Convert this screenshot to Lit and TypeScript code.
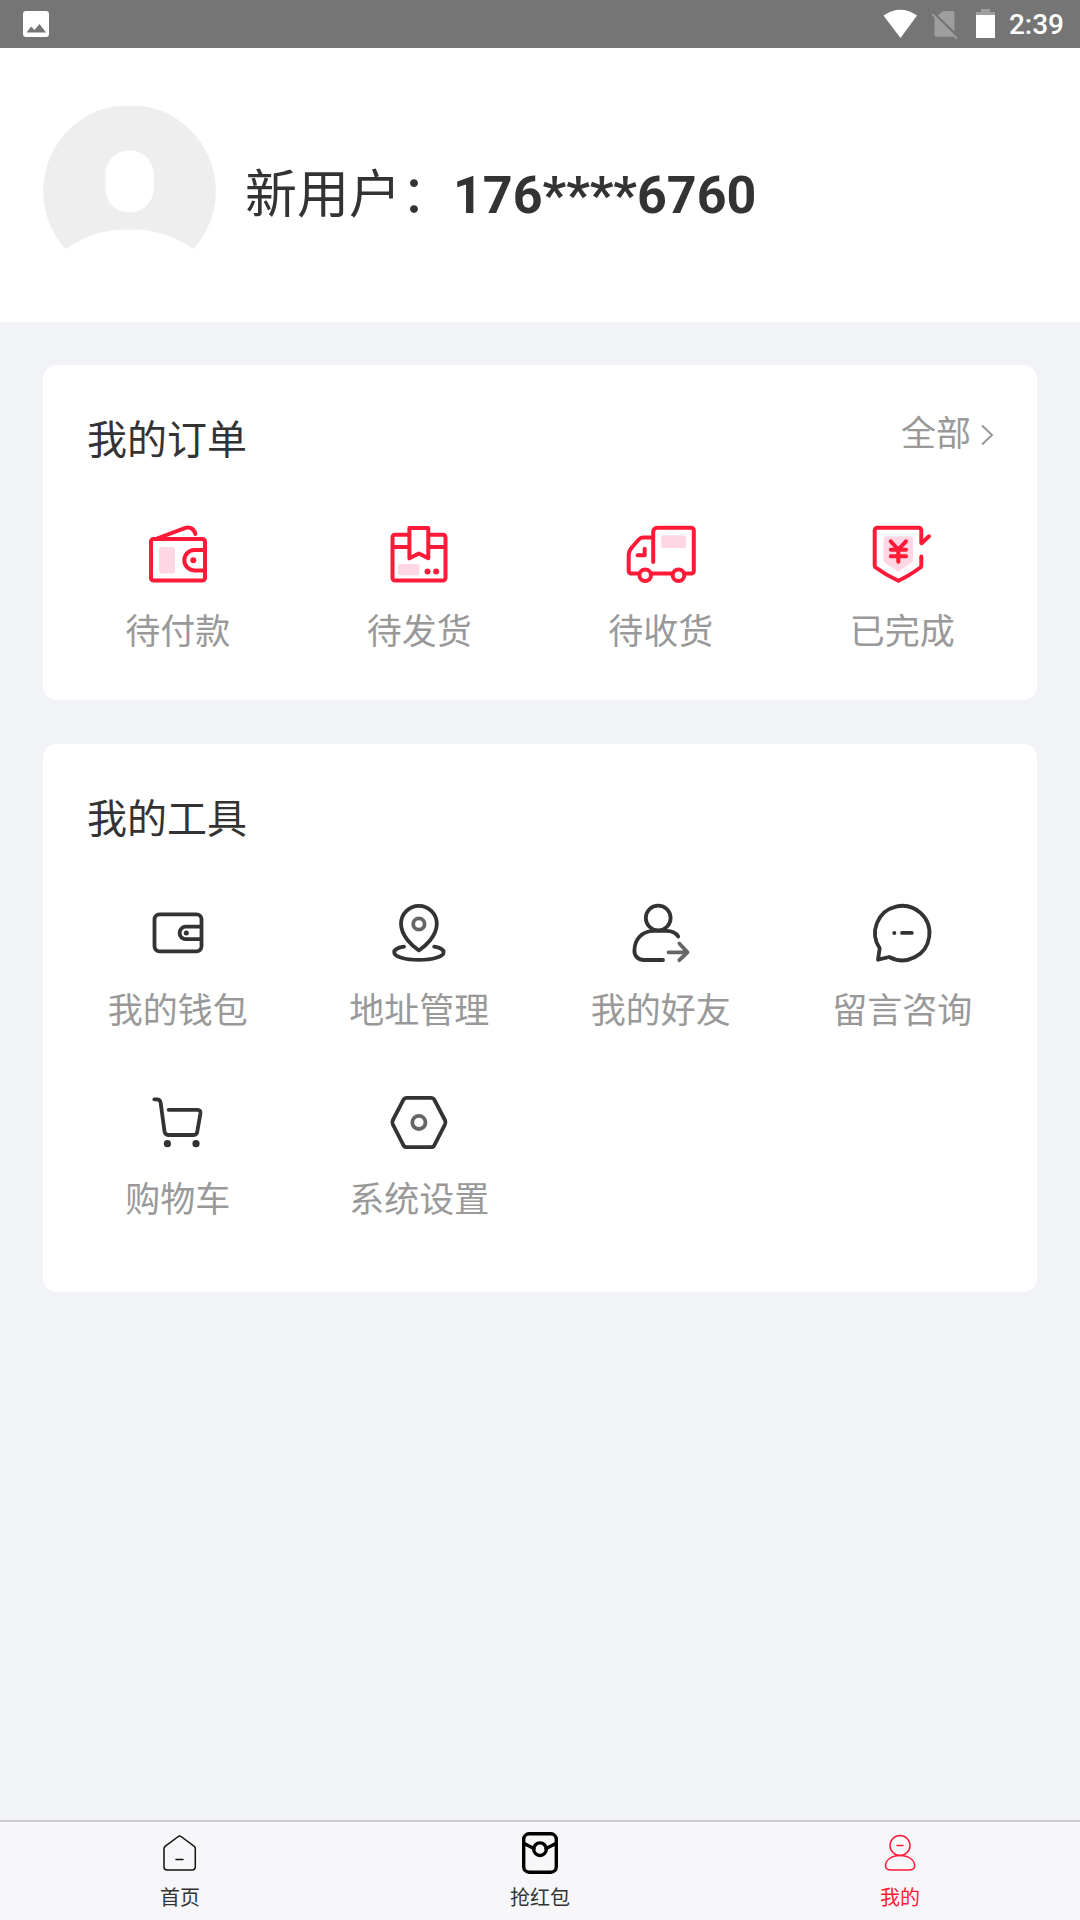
import { LitElement, html, css, svg, SVGTemplateResult } from "lit";
import { customElement, property, state } from "lit/decorators.js";
import { classMap } from "lit/directives/class-map.js";

interface Entry {
  label: string;
  icon: SVGTemplateResult;
}

const orderEntries: Entry[] = [
  {
    label: "待付款",
    icon: svg`
      <rect class="tint" x="21" y="33" width="16" height="26.5" rx="2.5" />
      <path d="M15.5 25H64.500a2.500 2.500 0 0 1 2.500 2.500V64a2.500 2.500 0 0 1 -2.500 2.500H15.500a2.500 2.500 0 0 1 -2.500 -2.500V27.500a2.500 2.500 0 0 1 2.500 -2.500Z" />
      <path d="M19 24.500L45.500 14.600C51 12.300 55.800 14 57.400 20" />
      <path d="M67 36H56.500a10.200 10.200 0 0 0 0 20.400H67" />
      <circle class="dot" cx="55.300" cy="46.200" r="3" />
    `,
  },
  {
    label: "待发货",
    icon: svg`
      <rect class="tint" x="19" y="50" width="21.500" height="11.200" rx="2.500" />
      <path d="M30 20.700H16a2.500 2.500 0 0 0 -2.500 2.500V64a2.500 2.500 0 0 0 2.500 2.500H64a2.500 2.500 0 0 0 2.500 -2.500V23.200a2.500 2.500 0 0 0 -2.500 -2.500H50" />
      <path d="M14 33H30M50 33H66" />
      <path d="M30.400 44.300V14H49.300V44.300L39.900 39.500Z" />
      <circle class="dot" cx="48.500" cy="57.500" r="3" />
      <circle class="dot" cx="57.200" cy="57.500" r="3" />
    `,
  },
  {
    label: "待收货",
    icon: svg`
      <rect class="tint" x="40.200" y="21.300" width="24.800" height="12.700" rx="2.500" />
      <path d="M32.200 48V17.700a4 4 0 0 1 4 -4H70.300a2.500 2.500 0 0 1 2.500 2.500V57a2.500 2.500 0 0 1 -2.500 2.500H64" />
      <path d="M31 23.500H21.800C20 23.500 19 24.200 17.800 25.500L11 33.200C8.500 36.200 7.700 38 7.700 41V57a2.500 2.500 0 0 0 2.500 2.500H17M31 59.500H51" />
      <path d="M23.700 34.700V41.300H16.500" />
      <circle cx="24.200" cy="61.300" r="5.800" />
      <circle cx="57.500" cy="61.300" r="5.800" />
    `,
  },
  {
    label: "已完成",
    icon: svg`
      <path class="tint" d="M24 22.300H48.500a2.500 2.500 0 0 1 2.500 2.500V46.500a2.500 2.500 0 0 1 -1.200 2L38 56.500a3 3 0 0 1 -3.500 0L22.800 48.500a2.500 2.500 0 0 1 -1.200 -2V24.800a2.500 2.500 0 0 1 2.500 -2.500Z" />
      <path d="M59.300 28.500V16.200a2.500 2.500 0 0 0 -2.500 -2.500H15.200a2.500 2.500 0 0 0 -2.500 2.500V51.500a2.500 2.500 0 0 0 1 2C20.500 58.500 28 63 36.300 66.800C44.500 63 51.500 58.500 58.300 53.500a2.500 2.500 0 0 0 1 -2V42.500" />
      <path d="M59.600 29.200L67 22.300" />
      <path d="M28.700 27.300L36.300 35.500L44 27.300M36.300 36V47.800M28.800 35.800H44M28.800 42.300H44" />
    `,
  },
];

const toolEntries: Entry[] = [
  {
    label: "我的钱包",
    icon: svg`
      <rect x="16.500" y="21.300" width="47" height="37" rx="5" />
      <path d="M63 33.700H47.800a6.200 6.200 0 0 0 0 12.400H63" />
      <circle class="dot" cx="48.300" cy="39.900" r="2.500" />
    `,
  },
  {
    label: "地址管理",
    icon: svg`
      <path d="M39.900 57.500C34 53.500 22 43 22 30.700A17.900 17.900 0 0 1 57.800 30.700C57.800 43 46 53.500 39.900 57.500Z" />
      <circle class="soft" cx="39.900" cy="31" r="5.700" />
      <path d="M25 53.700C19 54.600 15.200 56.800 15.200 59.200C15.200 63.800 26.500 66.900 39.900 66.900S64.600 63.800 64.600 59.200C64.600 56.800 61 54.600 55.200 53.700" />
    `,
  },
  {
    label: "我的好友",
    icon: svg`
      <circle cx="37.200" cy="25" r="12.400" />
      <path d="M57.200 43.500C55 39.800 51 37.900 45.500 37.900H33C20.500 37.900 13.400 47 13.400 58C13.400 63.300 17.500 67 23 67H42" />
      <path class="soft" d="M47.500 59.300H66M58.300 50.500L66.500 59.300L58.300 67.200" />
    `,
  },
  {
    label: "留言咨询",
    icon: svg`
      <path d="M17.700 55.300A27.200 27.200 0 1 1 27.300 64L16 66.700Z" />
      <circle class="dot" cx="32.300" cy="39.900" r="2" />
      <path d="M40 39.900H49.800" />
    `,
  },
  {
    label: "购物车",
    icon: svg`
      <path d="M16.300 17.300H19C21.300 17.300 22.300 18.500 22.600 20.500L26.500 49.300C26.900 51.700 28 53 30.300 53H55.500C57.800 53 59 51.800 59.300 49.500L62.400 31.500C62.700 29 61.700 27.800 59.500 27.800H30.700" />
      <circle class="dot" cx="29.400" cy="61.700" r="3.600" />
      <circle class="dot" cx="58" cy="61.700" r="3.600" />
    `,
  },
  {
    label: "系统设置",
    icon: svg`
      <path d="M27.800 15.800H52C53.600 15.800 54.600 16.400 55.400 17.800L65.900 38C66.700 39.500 66.700 41.200 65.900 42.700L55.400 63.200C54.600 64.600 53.600 65.200 52 65.200H27.800C26.200 65.200 25.200 64.600 24.400 63.200L13.900 42.700C13.100 41.200 13.100 39.500 13.900 38L24.400 17.800C25.200 16.400 26.200 15.800 27.800 15.800Z" />
      <circle class="soft" cx="39.900" cy="40.400" r="6.600" />
    `,
  },
];

const tabs: (Entry & { heavy?: boolean })[] = [
  {
    label: "首页",
    icon: svg`
      <path d="M8 19.500C8 18.500 8.300 18 9 17.400L22.300 7.500Q23.700 6.600 25 7.500L38.300 17.400C39 18 39.300 18.500 39.300 19.500V38a3 3 0 0 1 -3 3H11a3 3 0 0 1 -3 -3Z" />
      <path d="M20 30.500H27" />
    `,
  },
  {
    label: "抢红包",
    heavy: true,
    icon: svg`
      <rect x="7.700" y="4.800" width="32.600" height="38.400" rx="5.500" />
      <path d="M8 14.500L18 19.500M40 14.500L30 19.500" />
      <circle cx="24" cy="20.200" r="6.300" />
    `,
  },
  {
    label: "我的",
    icon: svg`
      <circle cx="24" cy="16.500" r="10" />
      <path d="M24 26.500C32.500 26.500 38.700 31 38.700 37C38.700 40 36.500 41 32.500 41H15.500C11.500 41 9.500 40 9.500 37C9.500 31 15.500 26.500 24 26.500Z" />
      <path d="M21 16.500H27" />
    `,
  },
];

@customElement("status-bar")
export class StatusBar extends LitElement {
  static styles = css`
    :host {
      display: flex;
      align-items: center;
      justify-content: space-between;
      height: 48px;
      padding: 0 16px 0 22px;
      background: #757575;
      color: #fff;
      font: 500 28px/48px Roboto, "Noto Sans CJK SC", sans-serif;
    }
    .group {
      display: flex;
      align-items: center;
      gap: 14px;
    }
    svg {
      display: block;
      fill: currentColor;
    }
    .dim {
      opacity: 0.3;
    }
    time {
      padding-top: 2px;
    }
  `;

  render() {
    return html`
      <svg width="28" height="28" viewBox="0 0 28 28" aria-hidden="true">
        <path fill-rule="evenodd" d="M4 1H24a3 3 0 0 1 3 3V24a3 3 0 0 1 -3 3H4a3 3 0 0 1 -3 -3V4a3 3 0 0 1 3 -3ZM4.500 22.500H24L17.500 14L12.500 20L9 16.500Z" />
      </svg>
      <div class="group">
        <svg width="34" height="30" viewBox="0 0 34 30" aria-hidden="true">
          <path d="M0.500 6.500Q17.500 -5 34 6.500L17.500 29Z" />
        </svg>
        <svg width="30" height="30" viewBox="0 0 30 30" aria-hidden="true">
          <path class="dim" d="M7 6.500L11 2.800Q12 2 13 2H21.500Q23.500 2 23.500 4V22.500ZM2 4.500L26.500 28.800L25 30.200L22.600 27.800H5.500Q3.500 27.800 3.500 25.800V8.600L0.600 5.800Z" />
        </svg>
        <svg width="20" height="30" viewBox="0 0 20 30" aria-hidden="true">
          <path class="dim" d="M6 0H15V3H20V6H1V3H6Z" />
          <path d="M1 6H20V29H1Z" />
        </svg>
        <time>2:39</time>
      </div>
    `;
  }
}

@customElement("entry-grid")
export class EntryGrid extends LitElement {
  @property({ attribute: false }) entries: Entry[] = [];
  @property() tone: "accent" | "plain" = "plain";

  static styles = css`
    :host {
      display: block;
    }
    .grid {
      display: grid;
      grid-template-columns: repeat(4, 1fr);
      row-gap: 46px;
    }
    .entry {
      display: flex;
      flex-direction: column;
      align-items: center;
      gap: 15px;
      padding: 0;
      border: 0;
      background: none;
      color: #999;
      font: 400 35px/48px Roboto, "Noto Sans CJK SC", sans-serif;
      cursor: pointer;
    }
    svg {
      display: block;
      width: 80px;
      height: 80px;
      fill: none;
      stroke: #333;
      stroke-width: 3.8;
      stroke-linecap: round;
      stroke-linejoin: round;
    }
    .accent svg {
      stroke: #ff1a37;
      stroke-width: 4;
    }
    .dot {
      fill: #333;
      stroke: none;
    }
    .accent .dot {
      fill: #ff1a37;
    }
    .soft {
      stroke: #666;
    }
    .tint {
      fill: #ffd6e4;
      stroke: none;
    }
  `;

  render() {
    return html`
      <div class=${classMap({ grid: true, accent: this.tone === "accent" })}>
        ${this.entries.map(
          (entry) => html`
            <button class="entry" type="button">
              <svg viewBox="0 0 80 80" aria-hidden="true">${entry.icon}</svg>
              <span>${entry.label}</span>
            </button>
          `
        )}
      </div>
    `;
  }
}

@customElement("tab-bar")
export class TabBar extends LitElement {
  @state() private current = "我的";

  static styles = css`
    :host {
      display: block;
    }
    .tabs {
      display: grid;
      grid-template-columns: repeat(3, 1fr);
      padding: 7px 0 10px;
      border-top: 2px solid #cbccd0;
      background: #f7f7fa;
    }
    .tab {
      display: flex;
      flex-direction: column;
      align-items: center;
      gap: 9px;
      color: #333;
      font: 400 20px/24px Roboto, "Noto Sans CJK SC", sans-serif;
      text-decoration: none;
    }
    svg {
      display: block;
      width: 48px;
      height: 48px;
      fill: none;
      stroke: #111;
      stroke-width: 1.5;
      stroke-linecap: round;
      stroke-linejoin: round;
    }
    .heavy svg {
      stroke: #000;
      stroke-width: 3.4;
    }
    .current {
      color: #ff1a37;
    }
    .current svg {
      stroke: #ff1a37;
    }
  `;

  private select(event: Event, label: string) {
    event.preventDefault();
    this.current = label;
  }

  render() {
    return html`
      <nav class="tabs">
        ${tabs.map(
          (tab) => html`
            <a
              href="#"
              class=${classMap({ tab: true, heavy: !!tab.heavy, current: tab.label === this.current })}
              @click=${(event: Event) => this.select(event, tab.label)}
            >
              <svg viewBox="0 0 48 48" aria-hidden="true">${tab.icon}</svg>
              <span>${tab.label}</span>
            </a>
          `
        )}
      </nav>
    `;
  }
}

@customElement("app-root")
export class AppRoot extends LitElement {
  static styles = css`
    :host {
      display: flex;
      flex-direction: column;
      min-height: 100vh;
      background: #f1f3f7;
      color: #333;
      font-family: Roboto, "Noto Sans CJK SC", sans-serif;
    }
    .profile {
      display: flex;
      align-items: center;
      gap: 29px;
      padding: 58px 43px 44px;
      background: #fff;
    }
    .avatar {
      display: block;
      flex: none;
      width: 173px;
      height: 172px;
      fill: #eee;
    }
    .name {
      margin: 0;
      padding-top: 8px;
      font-size: 52px;
      line-height: 72px;
      font-weight: 400;
    }
    .phone {
      font-weight: 700;
    }
    .content {
      flex: 1;
      display: flex;
      flex-direction: column;
      gap: 44px;
      padding: 43px;
    }
    .card {
      padding: 46px 14px 43px;
      border-radius: 14px;
      background: #fff;
    }
    .roomy {
      padding-bottom: 67px;
    }
    .head {
      display: flex;
      align-items: flex-start;
      justify-content: space-between;
      margin-bottom: 43px;
      padding: 0 29px 0 30px;
    }
    .title {
      margin: 0;
      font-size: 40px;
      line-height: 60px;
      font-weight: 400;
    }
    .all {
      display: flex;
      align-items: center;
      gap: 9px;
      color: #999;
      font-size: 35px;
      line-height: 48px;
      text-decoration: none;
    }
    .chevron {
      display: block;
      fill: none;
      stroke: currentColor;
      stroke-width: 2;
    }
  `;

  render() {
    return html`
      <status-bar></status-bar>
      <header class="profile">
        <svg class="avatar" viewBox="0 0 173 172" aria-hidden="true">
          <path
            fill-rule="evenodd"
            d="M22.500 143A86.300 86.300 0 1 1 150.500 143C131 130 112 123.800 94 123.800H79C61 123.800 42 130 22.500 143ZM86.500 44.500C73 44.500 62.500 55 62.500 68.500V82.500C62.500 96 73 106.300 86.500 106.300S110.700 96 110.700 82.500V68.500C110.700 55 100 44.500 86.500 44.500Z"
          />
        </svg>
        <h1 class="name">新用户：<span class="phone">176****6760</span></h1>
      </header>
      <main class="content">
        <section class="card">
          <div class="head">
            <h2 class="title">我的订单</h2>
            <a class="all" href="#">
              全部
              <svg class="chevron" width="14" height="24" viewBox="0 0 14 24" aria-hidden="true">
                <path d="M2 2.500L12 12L2 21.500" />
              </svg>
            </a>
          </div>
          <entry-grid tone="accent" .entries=${orderEntries}></entry-grid>
        </section>
        <section class="card roomy">
          <div class="head">
            <h2 class="title">我的工具</h2>
          </div>
          <entry-grid .entries=${toolEntries}></entry-grid>
        </section>
      </main>
      <tab-bar></tab-bar>
    `;
  }
}
